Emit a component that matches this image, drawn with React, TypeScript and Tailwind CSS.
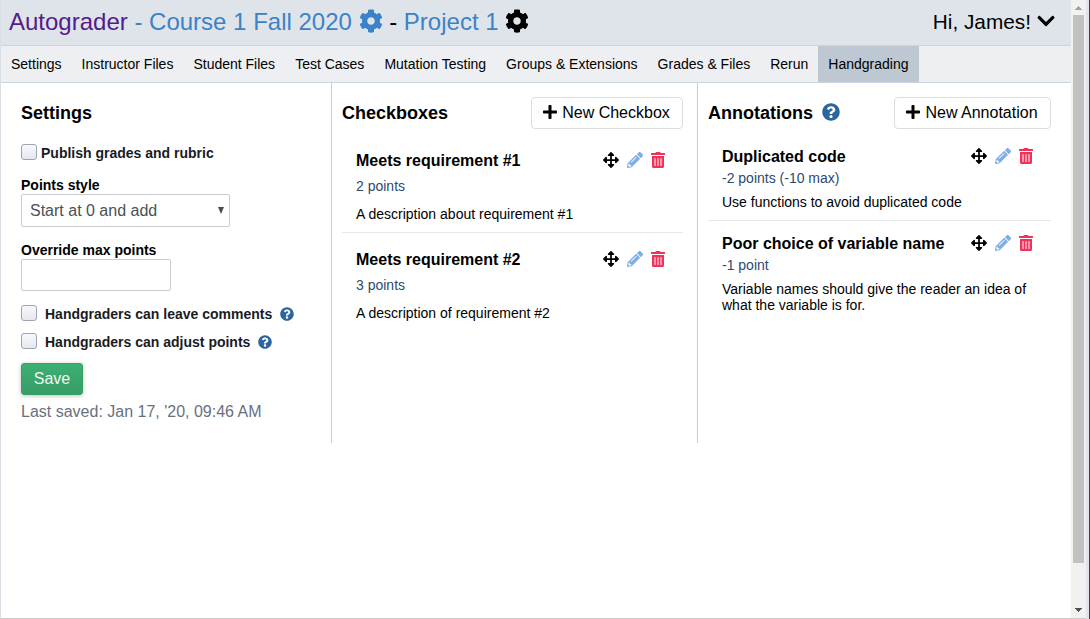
import React from "react";
import {
  FaArrowsAlt,
  FaChevronDown,
  FaCog,
  FaPencilAlt,
  FaPlus,
  FaQuestionCircle,
  FaTrashAlt,
} from "react-icons/fa";

const tabs = [
  "Settings",
  "Instructor Files",
  "Student Files",
  "Test Cases",
  "Mutation Testing",
  "Groups & Extensions",
  "Grades & Files",
  "Rerun",
  "Handgrading",
];

function Actions() {
  return (
    <div className="flex h-4 shrink-0 items-center text-[16px]">
      <FaArrowsAlt className="text-black" />
      <FaPencilAlt className="ml-2 text-[#7eaee8]" />
      <FaTrashAlt className="ml-2 w-[14px] shrink-0 text-[#f0325a]" />
    </div>
  );
}

function Checkbox({ label, help, gap }: { label: string; help?: boolean; gap: string }) {
  return (
    <label className="flex h-4 items-center text-[14px] leading-4 font-bold text-[#1a1b1f]">
      <input
        type="checkbox"
        className="h-4 w-4 appearance-none rounded-[3px] border border-[#9ca3b3] bg-linear-to-b from-[#f7f8fb] to-[#e6e8ef]"
      />
      <span className={gap}>{label}</span>
      {help && <FaQuestionCircle className="mt-px ml-2 text-[14px] text-[#2c669e]" />}
    </label>
  );
}

function NewButton({ label, width }: { label: string; width: string }) {
  return (
    <button
      className={`${width} flex h-8 items-center justify-center rounded-[4px] border border-[#dcdddf] bg-white text-[16px] whitespace-nowrap text-black`}
    >
      <FaPlus className="mr-[5px] -ml-px -mt-0.5 w-[14px] text-[16px]" />
      {label}
    </button>
  );
}

export default function App() {
  return (
    <div className="flex h-[619px] w-[1090px] overflow-hidden bg-white font-['Liberation_Sans',Arial,sans-serif] text-black">
      <div className="flex w-[1071px] flex-col border-b border-l border-b-[#cccccc] border-l-[#dadee5]">
        <header className="flex h-[46px] items-center justify-between border-b border-[#ccd5de] bg-[#dfe4eb] pr-[15px] pb-[2px] pl-2">
          <h1 className="flex items-center text-[24px] whitespace-pre">
            <span className="text-[#551a8b]">Autograder</span>
            <span className="text-[#3b82c8]"> - Course 1 Fall 2020 </span>
            <FaCog className="-mt-0.5 text-[#3b82c8]" />
            <span> - </span>
            <span className="text-[#3b82c8]">Project 1 </span>
            <FaCog className="-mt-0.5" />
          </h1>
          <div className="flex items-center text-[20.8px]">
            Hi, James!
            <FaChevronDown className="-mt-0.5 ml-[5px] text-[20px]" />
          </div>
        </header>
        <nav className="flex h-[37px] shrink-0 border-b border-[#ccd5de] bg-[#edeff3] text-[14px]">
          {tabs.map((tab) => (
            <a
              key={tab}
              className={`flex items-center px-[10px] whitespace-nowrap ${tab === "Handgrading" ? "bg-[#bdc8d3]" : ""}`}
            >
              {tab}
            </a>
          ))}
        </nav>

        <main className="flex h-[360px]">
          <section className="w-[331px] border-r border-[#c9cbd0] pl-5">
            <h2 className="mt-[18px] text-[18px] leading-6 font-bold">Settings</h2>
            <div className="mt-[19px]">
              <Checkbox label="Publish grades and rubric" gap="ml-1 pt-0.5" />
            </div>
            <div className="mt-[17px] text-[14px] leading-4 font-bold">Points style</div>
            <div className="mt-px flex h-[33px] w-[209px] items-center justify-between rounded-[2px] border border-[#cbcdd4] pr-[5px] pl-2 text-[16px] text-[#4a5058]">
              Start at 0 and add
              <svg width="6" height="7" viewBox="0 0 6 7" className="-mt-px fill-[#484c53]">
                <path d="M0 0h6L3 7z" />
              </svg>
            </div>
            <div className="mt-[15px] text-[14px] leading-4 font-bold">Override max points</div>
            <input className="mt-px block h-8 w-[150px] rounded-[2px] border border-[#cbcdd4] px-2" />
            <div className="mt-[14px]">
              <Checkbox label="Handgraders can leave comments" help gap="ml-2 pt-0.5" />
            </div>
            <div className="mt-3">
              <Checkbox label="Handgraders can adjust points" help gap="ml-2 pt-0.5" />
            </div>
            <button className="mt-[14px] flex h-8 w-[62px] items-center justify-center rounded-[3px] border border-[#36a066] bg-linear-to-b from-[#3cb073] to-[#379c66] text-[16px] text-[#f0f6f2] shadow-[0_1px_4px_rgba(0,0,0,0.25)]">
              Save
            </button>
            <div className="mt-[7px] text-[16px] leading-5 text-[#697080]">
              Last saved: Jan 17, '20, 09:46 AM
            </div>
          </section>

          <section className="w-[366px] border-r border-[#c9cbd0] pr-[14px] pl-[10px]">
            <div className="mt-[14px] flex h-8 items-center justify-between">
              <h2 className="text-[18px] font-bold">Checkboxes</h2>
              <NewButton label="New Checkbox" width="w-[152px]" />
            </div>
            {[1, 2].map((n) => (
              <article
                key={n}
                className={n === 1 ? "mt-[21px] border-b border-[#e7e8ea] pr-[18px] pb-2.5 pl-[14px]" : "mt-4 pr-[18px] pl-[14px]"}
              >
                <div className="flex h-5 items-center justify-between">
                  <h3 className="pt-0.5 text-[16px] leading-5 font-bold">Meets requirement #{n}</h3>
                  <Actions />
                </div>
                <div className="mt-2 text-[14px] leading-4 text-[#2d4a70]">{n + 1} points</div>
                <p className="mt-3 text-[14px] leading-4">
                  A description {n === 1 ? "about" : "of"} requirement #{n}
                </p>
              </article>
            ))}
          </section>

          <section className="w-[373px] pr-5 pl-[10px]">
            <div className="mt-[14px] flex h-8 items-center justify-between">
              <h2 className="flex items-center text-[18px] font-bold">
                Annotations
                <FaQuestionCircle className="-mt-0.5 ml-[9px] text-[18px] text-[#2c669e]" />
              </h2>
              <NewButton label="New Annotation" width="w-[157px]" />
            </div>
            <article className="mt-[17px] border-b border-[#e7e8ea] pr-[18px] pb-2.5 pl-[14px]">
              <div className="flex h-5 items-center justify-between">
                <h3 className="pt-0.5 text-[16px] leading-5 font-bold">Duplicated code</h3>
                <Actions />
              </div>
              <div className="mt-1 text-[14px] leading-4 text-[#2d4a70]">-2 points (-10 max)</div>
              <p className="mt-2 text-[14px] leading-4">Use functions to avoid duplicated code</p>
            </article>
            <article className="mt-3 pr-[18px] pl-[14px]">
              <div className="flex h-5 items-center justify-between">
                <h3 className="pt-0.5 text-[16px] leading-5 font-bold">Poor choice of variable name</h3>
                <Actions />
              </div>
              <div className="mt-1 text-[14px] leading-4 text-[#2d4a70]">-1 point</div>
              <p className="mt-2 text-[14px] leading-4">
                Variable names should give the reader an idea of what the variable is for.
              </p>
            </article>
          </section>
        </main>
      </div>

      <div className="flex w-[15px] flex-col items-center border-b border-[#cccccc] bg-[#f1f1f1]">
        <svg width="7" height="4" viewBox="0 0 7 4" className="mt-[6px] shrink-0 fill-[#a3a3a3]" shapeRendering="crispEdges">
          <path d="M3 0h1v1h1v1h1v1h1v1H0V3h1V2h1V1h1z" />
        </svg>
        <div className="mt-[5px] h-[548px] w-[11px] shrink-0 bg-[#c1c1c1]" />
        <svg width="7" height="4" viewBox="0 0 7 4" className="mt-[45px] shrink-0 fill-[#505050]" shapeRendering="crispEdges">
          <path d="M0 0h7v1H6v1H5v1H4v1H3V3H2V2H1V1H0z" />
        </svg>
      </div>
      <div className="w-[3px] bg-[#dfe4eb]" />
      <div className="w-px bg-[#3b4046]" />
    </div>
  );
}
